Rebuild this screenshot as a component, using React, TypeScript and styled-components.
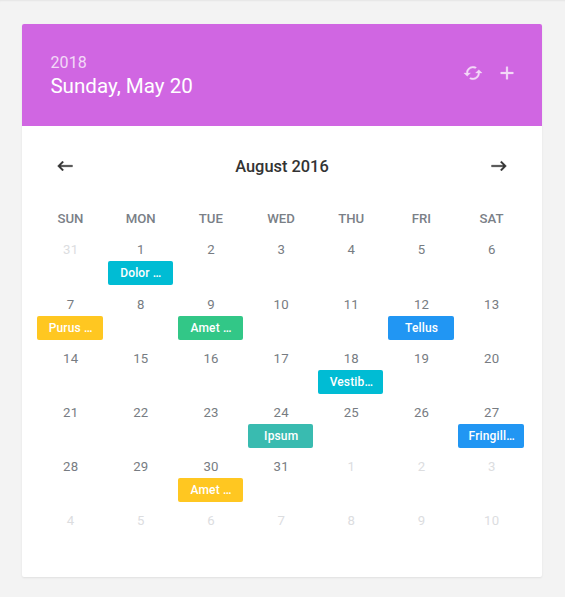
import React from "react";
import styled, { createGlobalStyle } from "styled-components";

const GlobalStyle = createGlobalStyle`
  * { box-sizing: border-box; }
  body { margin: 0; background: #f3f3f3; font-family: Roboto, "Liberation Sans", sans-serif; }
`;

const Page = styled.div`
  height: 597px;
  padding: 24px 23px 20px 22px;
  overflow: hidden;
  box-shadow: inset 0 2px 2px -1px rgba(0, 0, 0, 0.06);
`;

const Card = styled.section`
  height: 553px;
  background: #fff;
  border-radius: 2px;
  overflow: hidden;
  box-shadow: 0 1px 2px rgba(0, 0, 0, 0.08);
`;

const Header = styled.header`
  height: 102px;
  padding: 29px 25.5px 0 28.4px;
  display: flex;
  justify-content: space-between;
  background: #d066e2;
  color: #fff;
`;

const Year = styled.div`
  font-size: 16px;
  line-height: 20px;
  letter-spacing: 0.15px;
  opacity: 0.75;
`;

const Today = styled.div`
  font-size: 20.6px;
  line-height: 26px;
`;

const Actions = styled.div`
  display: flex;
  gap: 13.5px;
  padding-top: 10px;
  height: 30px;
  opacity: 0.75;
`;

const Icon = styled.svg`
  display: block;
  width: 20px;
  height: 20px;
  fill: currentColor;
  stroke: currentColor;
  stroke-width: 0.35;
`;

const Nav = styled.nav`
  height: 80px;
  padding: 0 33px;
  display: flex;
  align-items: center;
  justify-content: space-between;
  color: #333;
`;

const Month = styled.h2`
  margin: 0;
  font-size: 16.4px;
  font-weight: 500;
`;

const Grid = styled.div`
  display: grid;
  grid-template-columns: repeat(7, 1fr);
  grid-template-rows: 34.4px repeat(6, 54.15px);
  padding: 0 15.8px 0 13px;
`;

const Weekday = styled.div`
  font-size: 13.2px;
  font-weight: 500;
  line-height: 25px;
  text-align: center;
  text-indent: 0.8px;
  color: #7a8087;
`;

const Day = styled.div<{ $muted: boolean }>`
  min-width: 0;
  padding: 0 2.4px;
  font-size: 13.2px;
  line-height: 20px;
  text-align: center;
  text-indent: 1.2px;
  letter-spacing: 0.2px;
  color: ${(p) => (p.$muted ? "#dcdddf" : "#777c82")};
`;

const Event = styled.div<{ $color: string }>`
  height: 24px;
  margin-top: 1px;
  border-radius: 2px;
  overflow: hidden;
  white-space: nowrap;
  background: ${(p) => p.$color};
  color: #fff;
  font-size: 12px;
  font-weight: 500;
  letter-spacing: 0.15px;
  line-height: 24px;
`;

const weekdays = ["SUN", "MON", "TUE", "WED", "THU", "FRI", "SAT"];

const events: Record<number, { label: string; color: string }> = {
  1: { label: "Dolor …", color: "#00bcd4" },
  7: { label: "Purus …", color: "#ffc721" },
  9: { label: "Amet …", color: "#32c787" },
  12: { label: "Tellus", color: "#2196f3" },
  18: { label: "Vestib…", color: "#00bcd4" },
  24: { label: "Ipsum", color: "#39bbb0" },
  27: { label: "Fringill…", color: "#2196f3" },
  30: { label: "Amet …", color: "#ffc721" },
};

const days = Array.from({ length: 42 }, (_, i) => {
  if (i === 0) return { number: 31, muted: true };
  return i <= 31 ? { number: i, muted: false } : { number: i - 31, muted: true };
});

export default function App() {
  return (
    <Page>
      <GlobalStyle />
      <Card>
        <Header>
          <div>
            <Year>2018</Year>
            <Today>Sunday, May 20</Today>
          </div>
          <Actions>
            <Icon viewBox="0 0 24 24">
              <path d="M19 8l-4 4h3c0 3.31-2.69 6-6 6-1.01 0-1.97-.25-2.8-.7l-1.46 1.46C8.97 19.54 10.43 20 12 20c4.42 0 8-3.58 8-8h3l-4-4zM6 12c0-3.31 2.69-6 6-6 1.01 0 1.97.25 2.8.7l1.46-1.46C15.03 4.46 13.57 4 12 4c-4.42 0-8 3.58-8 8H1l4 4 4-4H6z" />
            </Icon>
            <Icon viewBox="0 0 24 24">
              <path d="M19.6 13.1h-6.5v6.5h-2.2v-6.5H4.4v-2.2h6.5V4.4h2.2v6.5h6.5z" />
            </Icon>
          </Actions>
        </Header>
        <Nav>
          <Icon viewBox="0 0 24 24">
            <path d="M21 11H6.83l3.58-3.59L9 6l-6 6 6 6 1.41-1.41L6.83 13H21z" />
          </Icon>
          <Month>August 2016</Month>
          <Icon viewBox="0 0 24 24">
            <path d="M3 13h14.17l-3.58 3.59L15 18l6-6-6-6-1.41 1.41L17.17 11H3z" />
          </Icon>
        </Nav>
        <Grid>
          {weekdays.map((d) => (
            <Weekday key={d}>{d}</Weekday>
          ))}
          {days.map(({ number, muted }, i) => (
            <Day key={i} $muted={muted}>
              {number}
              {!muted && events[number] && (
                <Event $color={events[number].color}>{events[number].label}</Event>
              )}
            </Day>
          ))}
        </Grid>
      </Card>
    </Page>
  );
}
